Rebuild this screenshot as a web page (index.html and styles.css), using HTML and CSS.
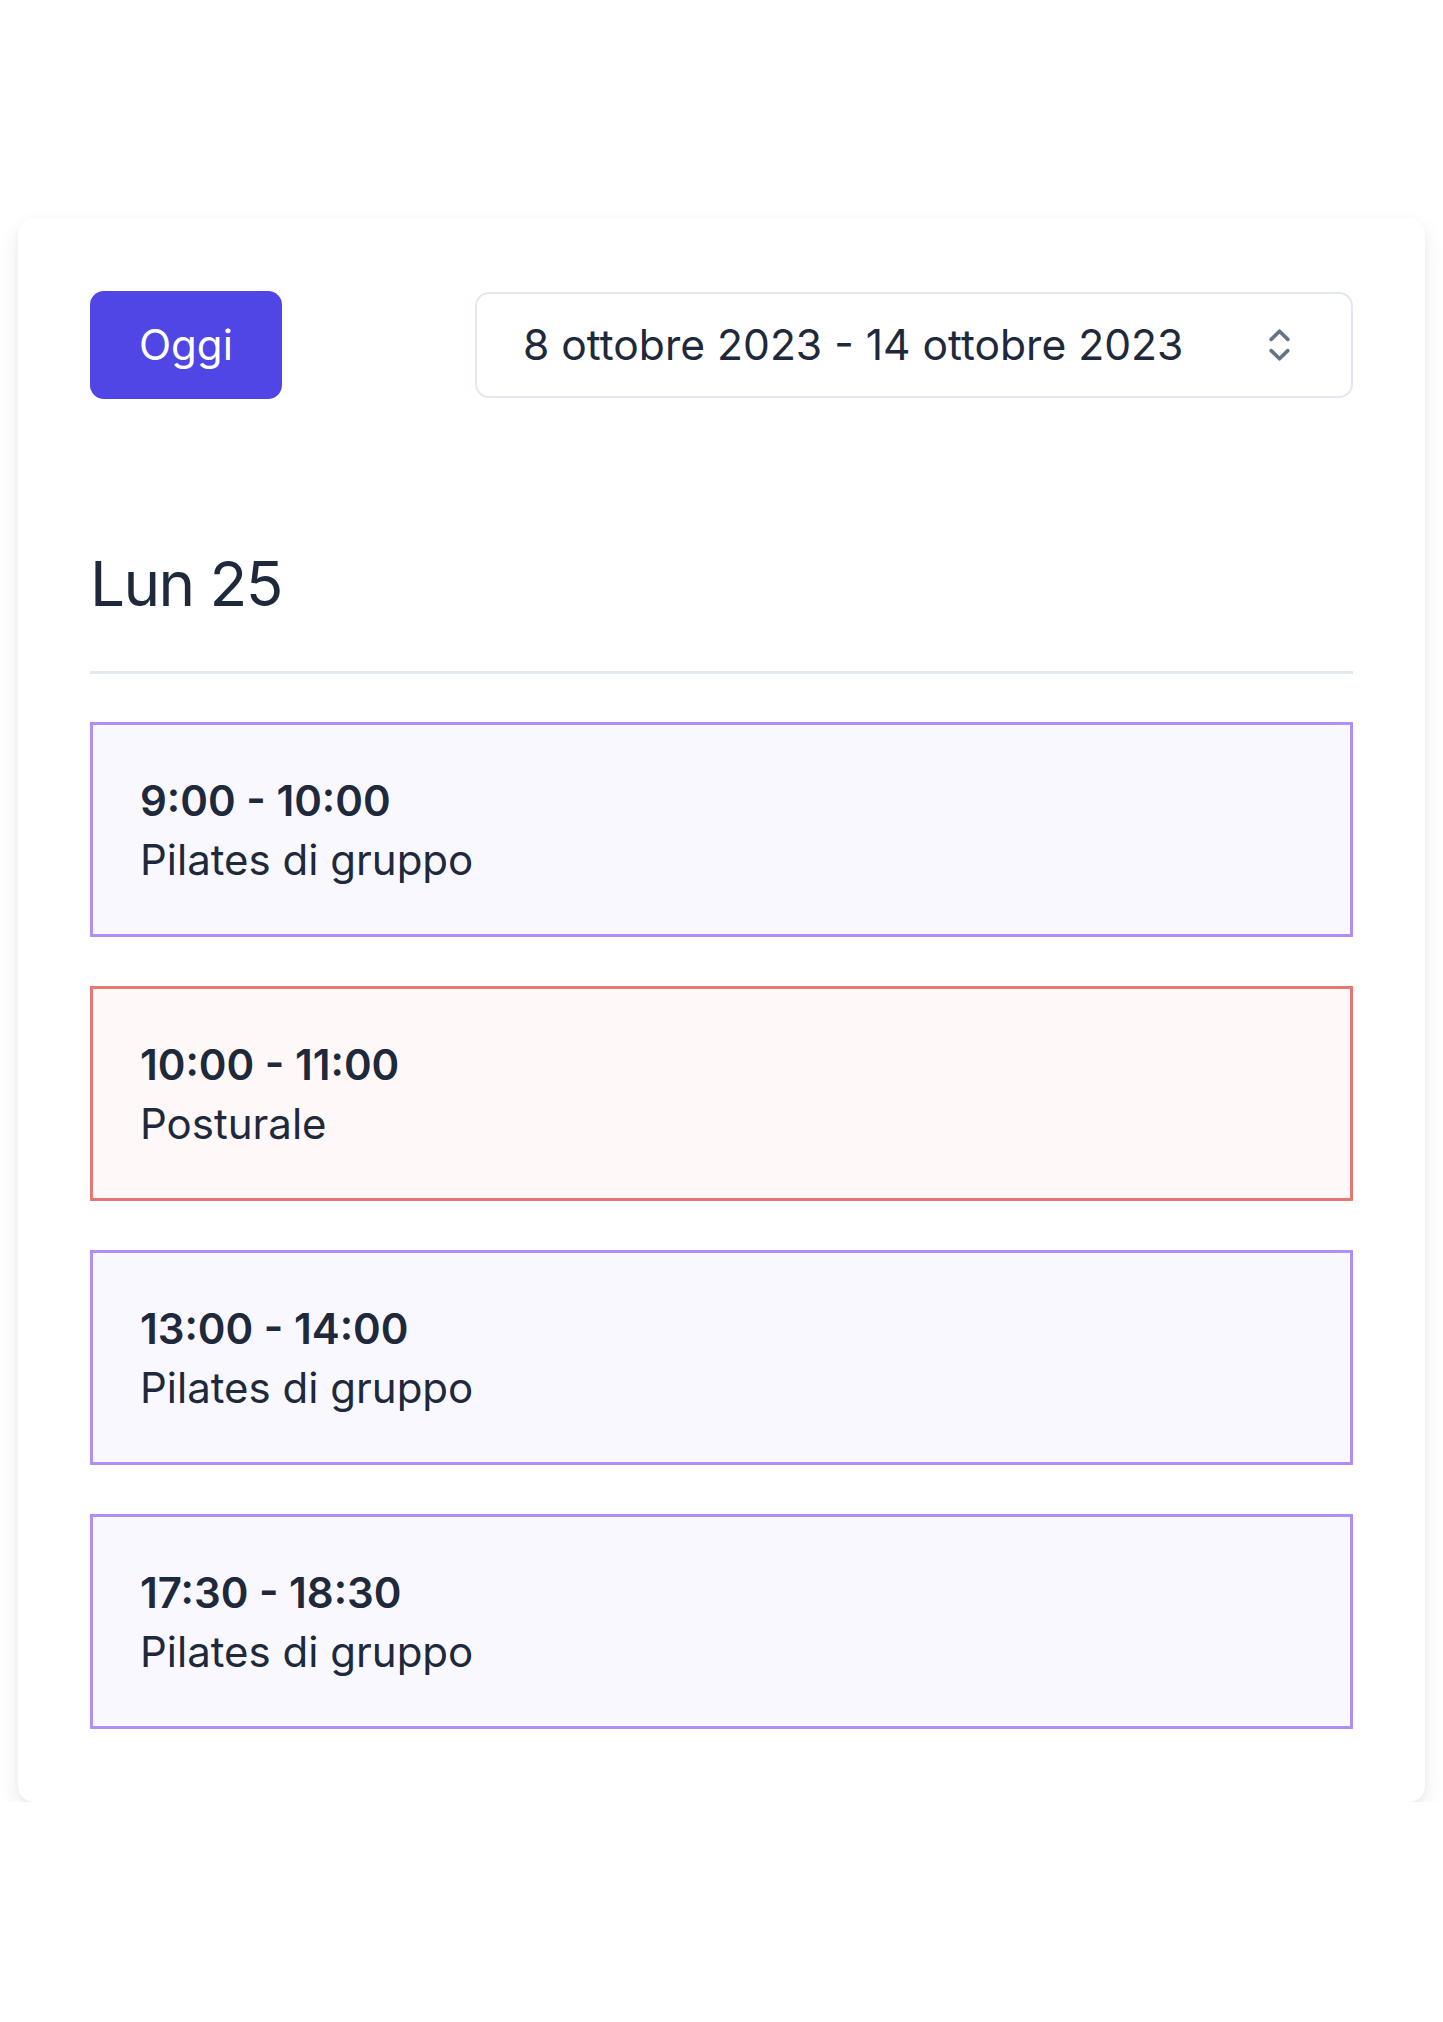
FILE: index.html
```html
<!DOCTYPE html>
<html lang="it">
<head>
<meta charset="utf-8">
<title>Calendario</title>
<link rel="stylesheet" href="styles.css">
</head>
<body>
<main class="panel">
  <div class="toolbar">
    <button class="btn-today" type="button">Oggi</button>
    <div class="range-select">
      <span class="range-text">8 ottobre 2023 - 14 ottobre 2023</span>
      <svg class="range-icon" width="21" height="32" viewBox="0 0 21 32" aria-hidden="true">
        <polyline points="2.2,10.4 10.5,2.2 18.8,10.4" fill="none" stroke="#64748b" stroke-width="3.6" stroke-linecap="round" stroke-linejoin="round"/>
        <polyline points="2.2,21.6 10.5,29.8 18.8,21.6" fill="none" stroke="#64748b" stroke-width="3.6" stroke-linecap="round" stroke-linejoin="round"/>
      </svg>
    </div>
  </div>

  <h2 class="day-title">Lun 25</h2>

  <ul class="events">
    <li class="event event-violet">
      <div class="event-time">9:00 - 10:00</div>
      <div class="event-name">Pilates di gruppo</div>
    </li>
    <li class="event event-red">
      <div class="event-time">10:00 - 11:00</div>
      <div class="event-name">Posturale</div>
    </li>
    <li class="event event-violet">
      <div class="event-time">13:00 - 14:00</div>
      <div class="event-name">Pilates di gruppo</div>
    </li>
    <li class="event event-violet">
      <div class="event-time">17:30 - 18:30</div>
      <div class="event-name">Pilates di gruppo</div>
    </li>
  </ul>
</main>
</body>
</html>
```
FILE: styles.css
```css
* { box-sizing: border-box; }

html, body {
  margin: 0;
  padding: 0;
  background: #ffffff;
}

body {
  font-family: Inter, "Noto Sans", "Liberation Sans", sans-serif;
  color: #1e293b;
  padding: 218px 18px 0;
}

.panel {
  background: #ffffff;
  border-radius: 16px;
  padding: 73px 72px 73px;
  box-shadow: 0 10px 22px rgba(15, 23, 42, 0.08), 0 2px 6px rgba(15, 23, 42, 0.04);
}

.toolbar {
  display: flex;
  justify-content: space-between;
  align-items: center;
}

.btn-today {
  height: 108px;
  padding: 0 49px;
  border: none;
  border-radius: 14px;
  background: #4f46e5;
  color: #ffffff;
  font-family: inherit;
  font-size: 42px;
  font-weight: 400;
  line-height: 1;
}

.range-select {
  width: 878px;
  height: 106px;
  border: 2px solid #e2e8f0;
  border-radius: 14px;
  display: flex;
  align-items: center;
  justify-content: space-between;
  padding: 0 61px 0 46px;
}

.range-text {
  font-size: 42.6px;
  line-height: 1;
  color: #1e293b;
}

.range-icon { display: block; }

.day-title {
  margin: 145px 0 0;
  font-size: 62px;
  line-height: 80px;
  font-weight: 400;
  letter-spacing: -0.025em;
  padding-bottom: 47px;
  border-bottom: 3px solid #e2e8f0;
}

.events {
  list-style: none;
  margin: 48px 0 0;
  padding: 0;
  display: flex;
  flex-direction: column;
  gap: 49px;
}

.event {
  padding: 46px 47px 45px;
  border: 3px solid;
  font-size: 42px;
  line-height: 59px;
}

.event-violet {
  border-color: #b08ef8;
  background: #faf8ff;
}

.event-red {
  border-color: #e77770;
  background: #fff8f8;
}

.event-time { font-weight: 600; }
.event-name { font-weight: 400; }
```
